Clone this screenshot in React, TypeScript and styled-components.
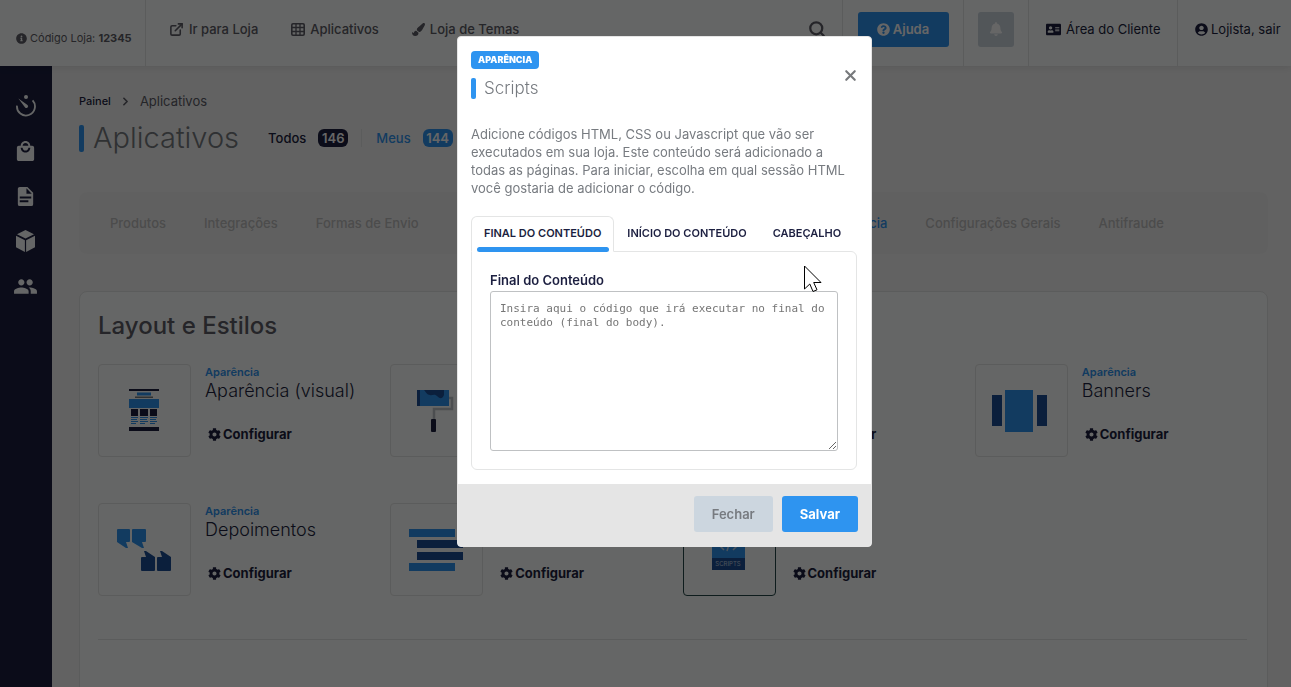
import React from "react";
import styled, { createGlobalStyle, css } from "styled-components";
import {
  FaAddressCard,
  FaBell,
  FaCog,
  FaInfoCircle,
  FaPaintBrush,
  FaQuestionCircle,
  FaUserCircle,
} from "react-icons/fa";
import { MdGroup, MdLocalMall } from "react-icons/md";
import { ChevronRight, ExternalLink, Search, X } from "lucide-react";

const c = {
  blue: "#2e94f0",
  navy: "#1c1f40",
  deep: "#1d4f96",
  text: "#5c5c66",
  muted: "#777b80",
  line: "#e4e5e5",
  page: "#f5f5f5",
};

const GlobalStyle = createGlobalStyle`
  *, *::before, *::after { box-sizing: border-box; }
  body {
    margin: 0;
    overflow: hidden;
    background: ${c.page};
    color: ${c.navy};
    font-family: Inter, "Open Sans", sans-serif;
    font-size: 13px;
    line-height: 18px;
  }
  h1, h2, h3, p, ul { margin: 0; padding: 0; }
  ul { list-style: none; }
  a { color: inherit; text-decoration: none; }
  button { border: 0; padding: 0; background: none; font: inherit; color: inherit; cursor: pointer; }
  svg { display: block; flex: none; }
`;

const Page = styled.div`
  display: flex;
  flex-direction: column;
  height: 100vh;
  overflow: hidden;
`;

const Header = styled.header`
  position: relative;
  display: flex;
  flex: none;
  height: 66px;
  background: #fdfffe;
  box-shadow: 0 1px 8px rgba(0, 0, 0, 0.1);
`;

const StoreCode = styled.div`
  display: flex;
  align-items: center;
  gap: 3px;
  width: 146px;
  padding: 10px 0 0 16px;
  border-right: 1px solid ${c.line};
  color: ${c.text};
  font-size: 11px;
`;

const TopNav = styled.nav`
  display: flex;
  flex: 1;
  align-items: center;
  gap: 33px;
  padding: 0 16px 8px 23px;
  color: ${c.text};
  font-weight: 500;
`;

const TopLink = styled.a`
  display: flex;
  align-items: center;
  gap: 5px;
`;

const SearchButton = styled.button`
  margin-left: auto;
`;

const HeaderCell = styled.div<{ $width: number; $start?: boolean }>`
  display: flex;
  align-items: center;
  justify-content: ${(p) => (p.$start ? "flex-start" : "center")};
  width: ${(p) => p.$width}px;
  padding: 0 0 8px ${(p) => (p.$start ? 17 : 0)}px;
  border-left: 1px solid ${c.line};
`;

const HelpButton = styled.button`
  display: flex;
  align-items: center;
  justify-content: center;
  gap: 3px;
  width: 91px;
  height: 35px;
  border-radius: 3px;
  background: ${c.blue};
  color: #fff;
  font-weight: 600;
`;

const BellButton = styled.button`
  display: grid;
  place-items: center;
  width: 36px;
  height: 35px;
  border-radius: 3px;
  background: #ccd6df;
  color: #fff;
`;

const AccountLink = styled(TopLink)<{ $gap: number }>`
  gap: ${(p) => p.$gap}px;
`;

const Body = styled.div`
  display: flex;
  flex: 1;
  min-height: 0;
`;

const Sidebar = styled.nav`
  display: flex;
  flex: none;
  flex-direction: column;
  align-items: center;
  gap: 21px;
  width: 52px;
  padding: 28px 1px 0 0;
  background: ${c.navy};
  color: #fdfffe;
`;

const SideLink = styled.a`
  display: grid;
  place-items: center;
  height: 24px;
`;

const Main = styled.main`
  flex: 1;
  min-width: 0;
  padding: 26px 23px 0 27px;
`;

const Breadcrumb = styled.nav`
  display: flex;
  align-items: center;
  gap: 8px;
  color: ${c.text};
`;

const BreadcrumbLink = styled.a`
  color: ${c.navy};
  font-size: 11px;
  font-weight: 500;
`;

const TitleRow = styled.div`
  display: flex;
  align-items: center;
  height: 36px;
  margin-top: 10px;
`;

const Title = styled.h1`
  display: flex;
  align-items: center;
  gap: 9px;
  margin-right: 29px;
  color: ${c.muted};
  font-size: 29px;
  font-weight: 300;
  line-height: 36px;

  &::before {
    content: "";
    width: 5px;
    height: 27px;
    border-radius: 2px;
    background: ${c.blue};
  }
`;

const Filter = styled.a<{ $accent?: boolean }>`
  display: flex;
  align-items: center;
  gap: 12px;
  color: ${(p) => (p.$accent ? c.blue : c.navy)};
  font-weight: 500;

  & + & {
    margin-left: 13px;
    padding-left: 14px;
    border-left: 1px solid ${c.line};
  }
`;

const Count = styled.span<{ $accent?: boolean }>`
  width: 30px;
  border-radius: 6px;
  background: ${(p) => (p.$accent ? c.blue : c.navy)};
  color: #fff;
  font-weight: 600;
  text-align: center;
`;

const Categories = styled.nav`
  display: flex;
  align-items: center;
  justify-content: space-between;
  height: 62px;
  margin-top: 36px;
  padding: 0 104px 0 31px;
  border-radius: 8px;
  background: #f1f1f1;
`;

const CategoryGroup = styled.div`
  display: flex;
  gap: 38px;
`;

const Category = styled.a<{ $active?: boolean }>`
  color: ${(p) => (p.$active ? c.blue : "#bdbdbd")};
  font-weight: 500;
`;

const Panel = styled.section`
  margin-top: 37px;
  padding: 19px 20px 120px 18px;
  border: 1px solid ${c.line};
  border-radius: 8px;
  background: #fdfffe;
`;

const PanelTitle = styled.h2`
  color: ${c.text};
  font-size: 24px;
  font-weight: 500;
  line-height: 30px;
`;

const Grid = styled.ul`
  display: grid;
  grid-template-columns: repeat(4, 1fr);
  gap: 46px 20px;
  margin-top: 23px;
  padding-bottom: 43px;
  border-bottom: 1px solid ${c.line};
`;

const Card = styled.li`
  display: flex;
  gap: 14px;
`;

const Tile = styled.div<{ $active?: boolean }>`
  display: grid;
  flex: none;
  place-items: center;
  width: 93px;
  height: 93px;
  padding-right: 2px;
  border: 1px solid ${(p) => (p.$active ? "#24484a" : c.line)};
  border-radius: 4px;
`;

const CardText = styled.div`
  display: flex;
  flex-direction: column;
  align-items: flex-start;
  justify-content: flex-end;
  padding-bottom: 14px;
`;

const CardKind = styled.span`
  color: ${c.blue};
  font-size: 11px;
  font-weight: 600;
  line-height: 16px;
`;

const CardName = styled.h3`
  margin-bottom: 23px;
  font-size: 18px;
  font-weight: 300;
  line-height: 22px;
`;

const Configure = styled.a`
  display: flex;
  align-items: center;
  gap: 2px;
  padding-left: 3px;
  font-weight: 700;
`;

const Backdrop = styled.div`
  position: fixed;
  inset: 0;
  display: flex;
  align-items: flex-start;
  justify-content: center;
  padding: 36px 0 0 38px;
  background: rgba(0, 0, 0, 0.6);
`;

const Dialog = styled.div`
  position: relative;
  width: 415px;
  overflow: hidden;
  border: 1px solid #e5e5e5;
  border-radius: 4px;
  background: #fff;
`;

const DialogHead = styled.div`
  display: flex;
  align-items: center;
  justify-content: space-between;
  padding: 14px 12px 0 13px;
`;

const DialogHeading = styled.div`
  display: flex;
  flex-direction: column;
  align-items: flex-start;
`;

const Tag = styled.span`
  padding: 0 7px;
  border-radius: 4px;
  background: ${c.blue};
  color: #fff;
  font-size: 9px;
  font-weight: 900;
  line-height: 18px;
  text-transform: uppercase;
`;

const DialogTitle = styled.h2`
  display: flex;
  align-items: center;
  gap: 8px;
  margin-top: 8px;
  color: ${c.muted};
  font-size: 17px;
  font-weight: 300;
  line-height: 22px;

  &::before {
    content: "";
    width: 5px;
    height: 21px;
    border-radius: 2px;
    background: ${c.blue};
  }
`;

const CloseButton = styled.button`
  color: #77797c;
`;

const DialogBody = styled.div`
  padding: 26px 14px 14px 13px;
`;

const Description = styled.p`
  color: ${c.muted};
`;

const Tabs = styled.div`
  display: flex;
  margin-top: 19px;
`;

const Tab = styled.button<{ $active?: boolean }>`
  position: relative;
  flex: none;
  height: 35px;
  padding: 0 12px 2px;
  border: 1px solid transparent;
  font-size: 11px;
  font-weight: 600;
  text-transform: uppercase;
  white-space: nowrap;

  ${(p) =>
    p.$active &&
    css`
      height: 36px;
      margin-bottom: -1px;
      border-color: ${c.line};
      border-bottom-color: #fff;
      border-radius: 6px 6px 0 0;
      background: #fff;

      &::after {
        content: "";
        position: absolute;
        right: 4px;
        bottom: -1px;
        left: 5px;
        height: 5px;
        border-radius: 3px;
        background: ${c.blue};
      }
    `}
`;

const TabPanel = styled.div`
  padding: 19px 18px 18px;
  border: 1px solid ${c.line};
  border-radius: 0 6px 6px 6px;
`;

const FieldLabel = styled.label`
  display: block;
  font-weight: 600;
`;

const CodeField = styled.textarea`
  display: block;
  width: 100%;
  height: 160px;
  margin-top: 2px;
  padding: 10px 9px;
  border: 1px solid #bfc1c3;
  border-radius: 3px;
  background: #fff;
  font-family: "DejaVu Sans Mono", monospace;
  font-size: 11px;
  line-height: 14px;
  resize: both;

  &::placeholder {
    color: #757575;
    opacity: 1;
  }
`;

const DialogFoot = styled.div`
  display: flex;
  justify-content: flex-end;
  gap: 9px;
  padding: 12px 13px 14px;
  background: #e5e5e5;
`;

const FootButton = styled.button<{ $primary?: boolean }>`
  height: 36px;
  padding: 0 18px;
  border-radius: 3px;
  background: ${(p) => (p.$primary ? c.blue : "#ccd6df")};
  color: ${(p) => (p.$primary ? "#fff" : c.muted)};
  font-weight: ${(p) => (p.$primary ? 700 : 600)};
`;

const Pointer = styled.svg`
  position: absolute;
  top: 228px;
  left: 346px;
`;

const TimerIcon = () => (
  <svg width="20" height="22" viewBox="0 0 20 22" fill="none" stroke="currentColor">
    <path d="M1 10.6a9 9 0 1 0 15.6-5.2" strokeWidth="1.8" />
    <circle cx="10" cy="2" r="2" fill="currentColor" stroke="none" />
    <path d="M2.4 3.6 11.5 10a1.7 1.7 0 1 1-2.4 2.4z" fill="currentColor" stroke="none" />
  </svg>
);

const DocumentIcon = () => (
  <svg width="23" height="23" viewBox="0 0 24 24" fill="currentColor">
    <path d="M13 9h5.5L13 3.5V9M6 2h8l6 6v12a2 2 0 0 1-2 2H6a2 2 0 0 1-2-2V4c0-1.100.9-2 2-2m9 16v-2H6v2h9m3-4v-2H6v2h12z" />
  </svg>
);

const CubeIcon = () => (
  <svg width="19" height="22" viewBox="0 0 19 22" fill="currentColor">
    <path d="M9.500 0 18 4.300 9.500 8.500 1 4.300zM0 5.700l8.900 4.500V22L0 17.300zM19 5.700l-8.900 4.500V22l8.900-4.700z" />
  </svg>
);

const TableIcon = () => (
  <svg width="14" height="13" viewBox="0 0 14 13" fill="none" stroke="currentColor">
    <rect x=".8" y=".8" width="12.400" height="11.400" rx="1.200" strokeWidth="1.600" />
    <path d="M1 4.500h12M1 8.500h12M5 1v11M9 1v11" strokeWidth="1.300" />
  </svg>
);

const LayoutArt = () => (
  <svg width="30" height="43" viewBox="0 0 30 43">
    <path fill={c.navy} d="M0 0h30v2H0zM0 38h30v4H0zM2 20h7v7H2zM11 20h8v7h-8zM21 20h7v7h-7z" />
    <path fill={c.muted} d="M6 7.500h18v1.500H6z" />
    <path fill={c.blue} d="M8 3.500h14v3H8zM0 10h30v9H0z" />
    <path
      stroke={c.blue}
      strokeWidth="1"
      d="M2 28.500h7M11 28.500h8M21 28.500h7M2 30.500h6M11 30.500h7M21 30.500h6M2 32.500h7M11 32.500h8M21 32.500h7M2 34.500h5M11 34.500h5M21 34.500h5"
    />
  </svg>
);

const RollerArt = () => (
  <svg width="38" height="44" viewBox="0 0 38 44">
    <path d="M31 9h4v11H17v12" fill="none" stroke="#bfc3c8" strokeWidth="2.500" />
    <path fill={c.blue} d="M1 1h31v16H1z" />
    <path fill={c.deep} d="M0 1h3v16H0zM7 1h20v5c-2 5-5 3-7 1-3-3-5 0-7-1-3 0-4-3-6-5z" />
    <rect x="14" y="30" width="5" height="13" rx="1" fill={c.navy} />
  </svg>
);

const BannerArt = () => (
  <svg width="58" height="44" viewBox="0 0 58 44">
    <path fill={c.deep} d="M1 6h10v31H1zM46 6h10v31H46z" />
    <path fill={c.blue} d="M14 1h28v42H14z" />
  </svg>
);

const QuoteArt = () => (
  <svg width="56" height="44" viewBox="0 0 56 44">
    <path
      fill={c.blue}
      d="M2 1h11q1 0 1 1v11q0 1-1 1h-3l2 6h-2L1 14V2q0-1 1-1zM17 1h12q1 0 1 1v11q0 1-1 1h-3l2 6h-2l-10-6V2q0-1 1-1z"
    />
    <path
      fill={c.deep}
      d="M26 43q-1 0-1-1V30q0-1 1-1h4l-2-6h2l9 6v13q0 1-1 1zM42 43q-1 0-1-1V30q0-1 1-1h4l-2-6h2l9 6v13q0 1-1 1z"
    />
  </svg>
);

const MenuArt = () => (
  <svg width="54" height="44" viewBox="0 0 54 44">
    <path fill={c.blue} d="M0 1h46v8H0zM0 35h46v8H0z" />
    <path fill={c.deep} d="M8 12h46v8H8zM8 24h46v8H8z" />
  </svg>
);

const ScriptsArt = () => (
  <svg width="33" height="44" viewBox="0 0 33 44">
    <path fill={c.blue} d="M0 1h33v29H0z" />
    <path fill={c.deep} d="M0 30h33v12H0z" />
    <path d="m12 14-4 4 4 4M21 14l4 4-4 4M18 13l-3 10" fill="none" stroke="#bfd0e4" strokeWidth="1.500" />
    <text x="16" y="38" textAnchor="middle" fill="#bfd0e4" fontSize="6" fontFamily="Inter, sans-serif">
      SCRIPTS
    </text>
  </svg>
);

const apps = [
  { id: "visual", name: "Aparência (visual)", art: <LayoutArt /> },
  { id: "roller", art: <RollerArt /> },
  { id: "blank" },
  { id: "banners", name: "Banners", art: <BannerArt /> },
  { id: "quotes", name: "Depoimentos", art: <QuoteArt /> },
  { id: "menus", art: <MenuArt /> },
  { id: "scripts", art: <ScriptsArt />, active: true },
];

const sideLinks = [
  { label: "Painel", icon: <TimerIcon /> },
  { label: "Pedidos", icon: <MdLocalMall size={23} /> },
  { label: "Conteúdo", icon: <DocumentIcon /> },
  { label: "Produtos", icon: <CubeIcon /> },
  { label: "Clientes", icon: <MdGroup size={25} /> },
];

export default function App() {
  return (
    <>
      <GlobalStyle />
      <Page>
        <Header>
          <StoreCode>
            <FaInfoCircle size={11} />
            <span>
              Código Loja: <b>12345</b>
            </span>
          </StoreCode>
          <TopNav>
            <TopLink href="#loja">
              <ExternalLink size={15} strokeWidth={2.5} />
              Ir para Loja
            </TopLink>
            <TopLink href="#aplicativos">
              <TableIcon />
              Aplicativos
            </TopLink>
            <TopLink href="#temas">
              <FaPaintBrush size={13} />
              Loja de Temas
            </TopLink>
            <SearchButton aria-label="Buscar">
              <Search size={18} strokeWidth={3} />
            </SearchButton>
          </TopNav>
          <HeaderCell $width={121}>
            <HelpButton>
              <FaQuestionCircle size={13} />
              Ajuda
            </HelpButton>
          </HeaderCell>
          <HeaderCell $width={65}>
            <BellButton aria-label="Notificações">
              <FaBell size={14} />
            </BellButton>
          </HeaderCell>
          <HeaderCell $width={149} $start>
            <AccountLink href="#cliente" $gap={5}>
              <FaAddressCard size={15} />
              Área do Cliente
            </AccountLink>
          </HeaderCell>
          <HeaderCell $width={114} $start>
            <AccountLink href="#sair" $gap={3}>
              <FaUserCircle size={13} />
              Lojista, sair
            </AccountLink>
          </HeaderCell>
        </Header>
        <Body>
          <Sidebar aria-label="Menu principal">
            {sideLinks.map((l) => (
              <SideLink key={l.label} href="#menu" aria-label={l.label}>
                {l.icon}
              </SideLink>
            ))}
          </Sidebar>
          <Main>
            <Breadcrumb aria-label="Trilha">
              <BreadcrumbLink href="#painel">Painel</BreadcrumbLink>
              <ChevronRight size={13} strokeWidth={3} />
              <span>Aplicativos</span>
            </Breadcrumb>
            <TitleRow>
              <Title>Aplicativos</Title>
              <Filter href="#todos">
                Todos <Count>146</Count>
              </Filter>
              <Filter href="#meus" $accent>
                Meus <Count $accent>144</Count>
              </Filter>
            </TitleRow>
            <Categories aria-label="Categorias">
              <CategoryGroup>
                <Category href="#produtos">Produtos</Category>
                <Category href="#integracoes">Integrações</Category>
                <Category href="#envio">Formas de Envio</Category>
                <Category href="#erp">ERP</Category>
              </CategoryGroup>
              <CategoryGroup>
                <Category href="#aparencia" $active>
                  Aparência
                </Category>
                <Category href="#gerais">Configurações Gerais</Category>
                <Category href="#antifraude">Antifraude</Category>
              </CategoryGroup>
            </Categories>
            <Panel>
              <PanelTitle>Layout e Estilos</PanelTitle>
              <Grid>
                {apps.map((a) => (
                  <Card key={a.id}>
                    <Tile $active={a.active}>{a.art}</Tile>
                    <CardText>
                      {a.name && <CardKind>Aparência</CardKind>}
                      {a.name && <CardName>{a.name}</CardName>}
                      <Configure href="#configurar">
                        <FaCog size={13} />
                        Configurar
                      </Configure>
                    </CardText>
                  </Card>
                ))}
              </Grid>
            </Panel>
          </Main>
        </Body>
      </Page>
      <Backdrop>
        <Dialog role="dialog" aria-modal="true" aria-labelledby="dialog-title">
          <DialogHead>
            <DialogHeading>
              <Tag>Aparência</Tag>
              <DialogTitle id="dialog-title">Scripts</DialogTitle>
            </DialogHeading>
            <CloseButton aria-label="Fechar janela">
              <X size={17} strokeWidth={3} />
            </CloseButton>
          </DialogHead>
          <DialogBody>
            <Description>
              Adicione códigos HTML, CSS ou Javascript que vão ser executados em sua loja. Este
              conteúdo será adicionado a todas as páginas. Para iniciar, escolha em qual sessão HTML
              você gostaria de adicionar o código.
            </Description>
            <Tabs role="tablist">
              <Tab role="tab" aria-selected="true" $active>
                Final do Conteúdo
              </Tab>
              <Tab role="tab" aria-selected="false">
                Início do Conteúdo
              </Tab>
              <Tab role="tab" aria-selected="false">
                Cabeçalho
              </Tab>
            </Tabs>
            <TabPanel role="tabpanel">
              <FieldLabel htmlFor="script-code">Final do Conteúdo</FieldLabel>
              <CodeField
                id="script-code"
                placeholder="Insira aqui o código que irá executar no final do conteúdo (final do body)."
              />
            </TabPanel>
          </DialogBody>
          <DialogFoot>
            <FootButton>Fechar</FootButton>
            <FootButton $primary>Salvar</FootButton>
          </DialogFoot>
          <Pointer width="19" height="28" viewBox="0 0 19 28" aria-hidden="true">
            <path
              d="M.5 1v23l5.300-5 3.200 7.500 4-1.700-3.300-7.300H17z"
              fill="#fff"
              stroke="#000"
            />
          </Pointer>
        </Dialog>
      </Backdrop>
    </>
  );
}
